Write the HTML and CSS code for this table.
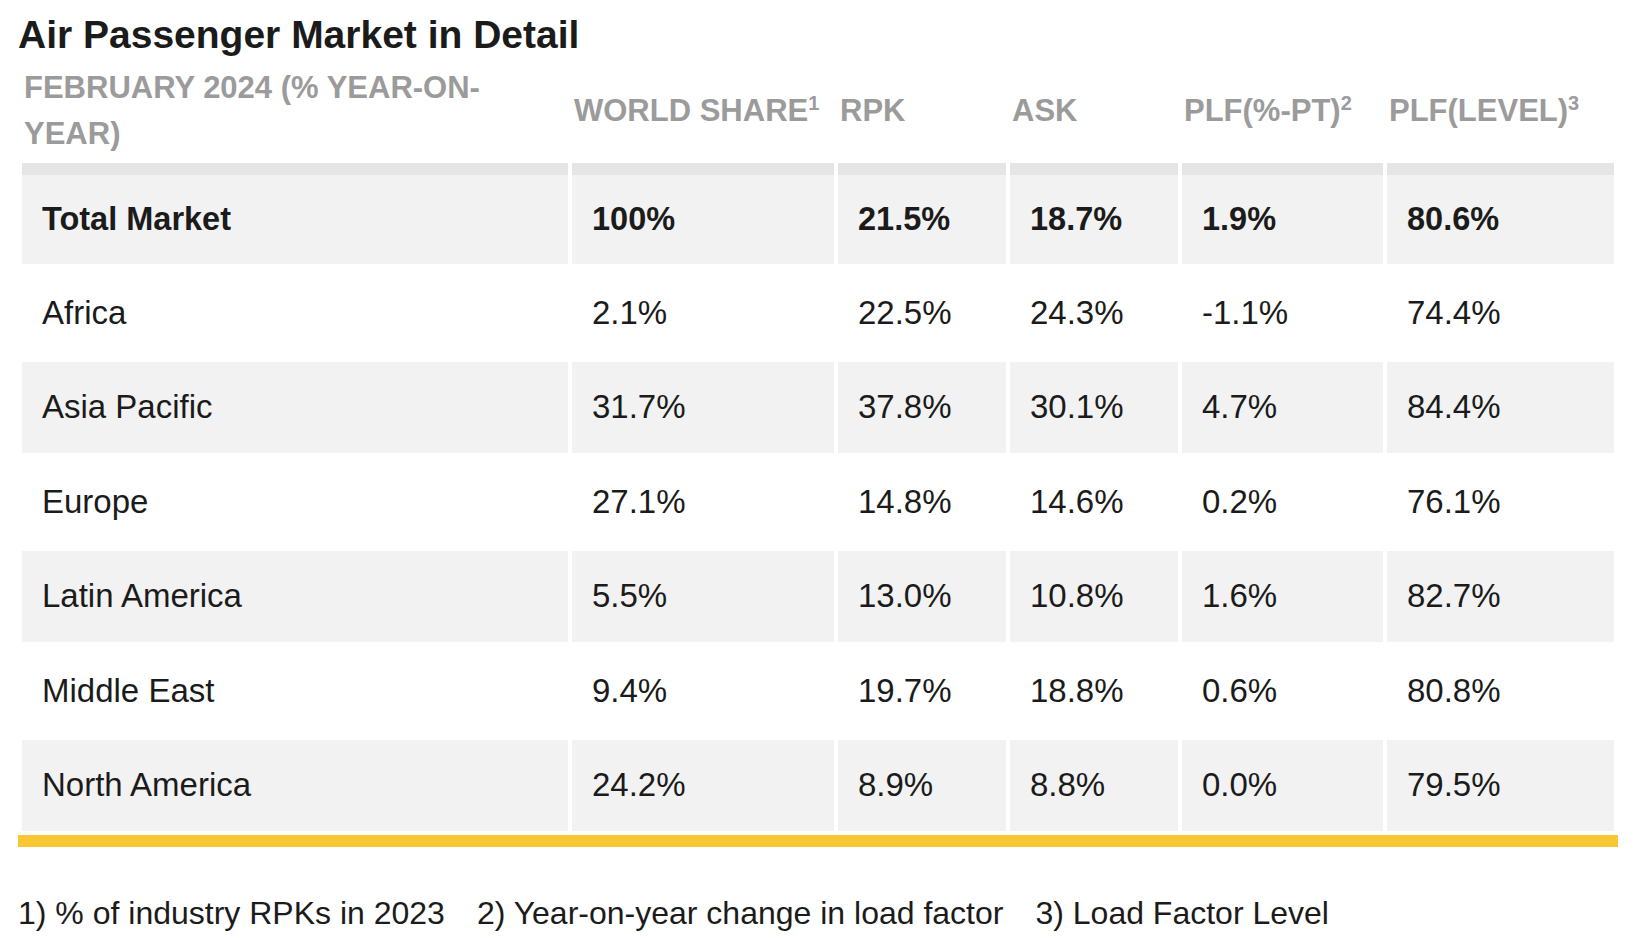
FILE: index.html
```html
<!DOCTYPE html>
<html lang="en">
<head>
<meta charset="utf-8">
<title>Air Passenger Market in Detail</title>
<link rel="stylesheet" href="styles.css">
</head>
<body>
<h1 class="title">Air Passenger Market in Detail</h1>
<table class="market">
  <colgroup>
    <col class="c-region">
    <col class="c-share">
    <col class="c-rpk">
    <col class="c-ask">
    <col class="c-plfpt">
    <col class="c-plflvl">
  </colgroup>
  <thead>
    <tr>
      <th>FEBRUARY 2024 (% YEAR-ON-YEAR)</th>
      <th>WORLD SHARE<sup>1</sup></th>
      <th>RPK</th>
      <th>ASK</th>
      <th>PLF(%-PT)<sup>2</sup></th>
      <th>PLF(LEVEL)<sup>3</sup></th>
    </tr>
  </thead>
  <tbody>
    <tr class="total shaded">
      <td>Total Market</td><td>100%</td><td>21.5%</td><td>18.7%</td><td>1.9%</td><td>80.6%</td>
    </tr>
    <tr>
      <td>Africa</td><td>2.1%</td><td>22.5%</td><td>24.3%</td><td>-1.1%</td><td>74.4%</td>
    </tr>
    <tr class="shaded">
      <td>Asia Pacific</td><td>31.7%</td><td>37.8%</td><td>30.1%</td><td>4.7%</td><td>84.4%</td>
    </tr>
    <tr>
      <td>Europe</td><td>27.1%</td><td>14.8%</td><td>14.6%</td><td>0.2%</td><td>76.1%</td>
    </tr>
    <tr class="shaded">
      <td>Latin America</td><td>5.5%</td><td>13.0%</td><td>10.8%</td><td>1.6%</td><td>82.7%</td>
    </tr>
    <tr>
      <td>Middle East</td><td>9.4%</td><td>19.7%</td><td>18.8%</td><td>0.6%</td><td>80.8%</td>
    </tr>
    <tr class="shaded">
      <td>North America</td><td>24.2%</td><td>8.9%</td><td>8.8%</td><td>0.0%</td><td>79.5%</td>
    </tr>
  </tbody>
</table>
<p class="notes">
  <span>1) % of industry RPKs in 2023</span>
  <span>2) Year-on-year change in load factor</span>
  <span>3) Load Factor Level</span>
</p>
</body>
</html>
```
FILE: styles.css
```css
html, body {
  margin: 0;
  padding: 0;
  background: #ffffff;
}

body {
  padding: 0 18px;
  font-family: "Liberation Sans", Arial, sans-serif;
  color: #1b1b1b;
}

.title {
  margin: 12px 0 1px;
  font-size: 39px;
  line-height: 46px;
  font-weight: 700;
  color: #1b1b1b;
}

.market {
  width: 1600px;
  table-layout: fixed;
  border-collapse: separate;
  border-spacing: 4px;
  border-bottom: 12px solid #f9c733;
}

.c-region { width: 546px; }
.c-share { width: 262px; }
.c-rpk { width: 168px; }
.c-ask { width: 168px; }
.c-plfpt { width: 201px; }
.c-plflvl { width: 227px; }

.market th {
  padding: 2px 12px 2px 2px;
  text-align: left;
  vertical-align: middle;
  font-size: 31px;
  line-height: 46px;
  font-weight: 700;
  color: #9b9b9b;
  white-space: normal;
}

.market th sup {
  font-size: 20px;
  line-height: 0;
  vertical-align: 11px;
}

.market td {
  padding: 23px 20px 23px 20px;
  font-size: 33px;
  line-height: 44.5px;
  text-align: left;
  vertical-align: middle;
  background: #ffffff;
}

.market tr.shaded td {
  background: #f2f2f2;
}

.market tr.total td {
  padding-top: 22px;
  padding-bottom: 22px;
  border-top: 12px solid #e5e5e5;
  font-size: 32.5px;
  font-weight: 700;
}

.notes {
  margin: 44px 0 0;
  display: flex;
  gap: 32px;
  font-size: 32px;
  line-height: 44px;
  color: #1b1b1b;
}
```
